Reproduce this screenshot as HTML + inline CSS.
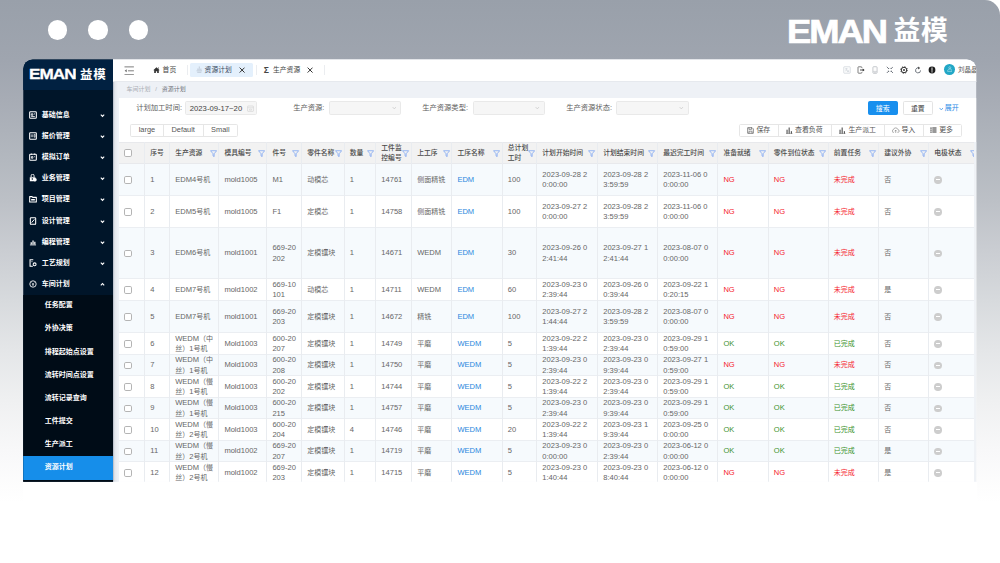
<!DOCTYPE html>
<html lang="zh-CN">
<head>
<meta charset="utf-8">
<title>EMAN 益模 - 资源计划</title>
<style>
*{box-sizing:border-box;margin:0;padding:0}
html,body{width:1000px;height:563px;overflow:hidden;background:#fff}
body{font-family:"Liberation Sans","Noto Sans CJK SC",sans-serif;font-size:7px;color:#555;position:relative;-webkit-font-smoothing:antialiased}
.abs,.bg,.dot,.win,.win>*,.th,.td,.tr,.thead,.vl,.fn{position:absolute}
.bg{left:0;top:0;width:1000px;height:520px;border-top-right-radius:15px;
 background:linear-gradient(180deg,#99a0aa 0px,#9fa5af 60px,#a7acb5 100px,#b3b8bf 160px,#bcc0c6 200px,#cacdd2 250px,#d7dadd 300px,#e4e6e8 350px,#eff0f1 400px,#f8f8f9 450px,#ffffff 502px)}
.dot{width:19.5px;height:19.5px;border-radius:50%;background:#fff;top:20.2px}
.brand{position:absolute;left:789px;top:12px;height:36px;color:#fff;white-space:nowrap;font-weight:700}
.brand .en{position:absolute;left:-2.4px;top:4.3px;font-size:32.6px;line-height:32px;letter-spacing:-1.8px;-webkit-text-stroke:0.7px #fff;transform-origin:0 50%;transform:scaleX(1.115)}
.brand .cn{position:absolute;left:104.6px;top:4.2px;font-size:26.8px;line-height:30px;font-family:"Liberation Sans","Noto Sans CJK SC",sans-serif;font-weight:700;letter-spacing:0.5px}
.win{left:0;top:0;width:1000px;height:563px;clip-path:inset(59.5px 23.8px 81.3px 23.2px round 9.5px 9.5px 0 0);background:#eef1f6}
/* sidebar */
.sb{left:23px;top:59px;width:89.9px;height:423px;background:#001529}
.sbh{left:23px;top:59px;width:89.9px;height:31px;background:#012141}
.sub{left:23px;top:294.8px;width:89.9px;height:190px;background:#000c17}
.sel{left:23px;top:456px;width:89.9px;height:24px;background:#168eea}
.logo{left:29.6px;top:66px;color:#fff;font-weight:700;white-space:nowrap;height:16px}
.logo .en{position:absolute;left:-0.8px;top:-0.1px;font-size:15px;line-height:16px;letter-spacing:-0.83px;-webkit-text-stroke:0.3px #fff;transform-origin:0 50%;transform:scaleX(1.14)}
.logo .cn{position:absolute;left:50.5px;top:1px;font-size:12.5px;line-height:16px;font-family:"Liberation Sans","Noto Sans CJK SC",sans-serif;font-weight:700;letter-spacing:0.6px}
.mi{left:41.8px;color:#fff;font-weight:700;font-size:7px;line-height:10px;white-space:nowrap;height:10px;font-family:"Liberation Sans","Noto Sans CJK SC",sans-serif}
.si{left:44.8px;color:#fff;font-weight:700;font-size:7px;line-height:10px;white-space:nowrap;height:10px;font-family:"Liberation Sans","Noto Sans CJK SC",sans-serif}
.ic{left:29.4px;width:8px;height:8px}
.chv{left:99.6px;width:5px;height:5px}
/* topbar */
.tb{left:112.9px;top:59px;width:865px;height:23px;background:#fff;border-bottom:1px solid #e6e9ee}
.bc{left:126.4px;top:85px;font-size:6px;line-height:9px;color:#a9adb3;white-space:nowrap}
.bc b{font-weight:400;color:#6b6f76}
.tab{top:63.2px;height:13px;line-height:13px;font-size:6.8px;color:#444;white-space:nowrap}
.tabact{left:190.4px;top:62.6px;width:62.2px;height:14px;background:#e4f0fc;border-radius:1.5px}
.sep{top:65px;width:0.6px;height:9.5px;background:#ebedf0}
/* panel */
.panel{left:118.5px;top:97.5px;width:859px;height:400px;background:#fff}
.lbl{top:103.1px;font-size:7.3px;line-height:10px;color:#5c5c5c;white-space:nowrap;text-align:right}
.inp{top:101px;height:14px;background:#f6f6f6;border:0.6px solid #e9e9e9;border-radius:1.6px}
.btn{height:14px;line-height:13.4px;border:0.6px solid #e4e4e4;border-radius:1.6px;background:#fff;font-size:6.9px;text-align:center;color:#444;white-space:nowrap}
.grp{height:13.4px;border:0.6px solid #e6e6e6;border-radius:1.6px;background:#fff}
.gt{font-size:6.9px;line-height:13.4px;height:13.4px;color:#555;white-space:nowrap;text-align:center}
.gd{width:0.6px;height:13.4px;background:#e6e6e6}
/* table */
.thead{background:#f2f2f2;border-top:1px solid #e8e9ec;border-bottom:1px solid #e8e9ec}
.tr{background:#fff;border-bottom:1px solid #ebeef2}
.tr.odd{background:#f6fafd}
.vl{width:0.6px;background:#e9ecf0}
.th,.td{display:flex;align-items:center;padding-left:5.8px;overflow:hidden}
.th .t{font-family:"Liberation Sans","Noto Sans CJK SC",sans-serif;font-weight:500;font-size:6.8px;line-height:9.6px;color:#4a4a4a;white-space:nowrap}
.td .t{font-size:7.55px;line-height:10.4px;color:#666;white-space:nowrap}
.td .t .c{font-size:7px}
.td.lk .t{color:#2b87dd}
.td.ng .t{color:#f5222d}
.td.ok .t{color:#3c922e}
.cb{display:block;width:7.6px;height:7.6px;border:0.9px solid #b4b4b4;border-radius:1.8px;background:#fff;margin-left:-0.3px}
.minus{display:block;width:7.6px;height:7.6px;border-radius:50%;background:#cdcdcd;position:relative;margin-left:-0.1px}
.minus:after{content:"";position:absolute;left:1.9px;right:1.9px;top:3.1px;height:1px;background:#fff}
.fn{width:7.2px;height:7.2px}
</style>
</head>
<body>
<div class="bg"></div>
<div class="dot" style="left:47.8px"></div>
<div class="dot" style="left:88.3px"></div>
<div class="dot" style="left:128.6px"></div>
<div class="brand"><span class="en">EMAN</span><span class="cn">益模</span></div>

<div class="abs" style="left:23.2px;top:481.7px;width:953.6px;height:90px;background:#fff"></div>
<div class="win">
  <!-- sidebar -->
  <div class="sb"></div>
  <div class="sbh"></div>
  <div class="sub"></div>
  <div class="sel"></div>
  <div class="logo"><span class="en">EMAN</span><span class="cn">益模</span></div>
  <svg class="ic" style="top:111.1px" viewBox="0 0 12 12"><rect x="1" y="1.2" width="10" height="9.6" rx="1.2" fill="none" stroke="#fff" stroke-width="1.6"/><path d="M3.4 4.2h2.4v2.2H3.4zM3.2 8.4h5.6M7.4 4.4h1.6" stroke="#fff" stroke-width="1.3" fill="none"/></svg>
  <div class="mi" style="top:110.0px">基础信息</div>
  <svg class="chv" style="top:113.0px" viewBox="0 0 10 10"><path d="M1.6 3.2L5 6.8l3.4-3.6" fill="none" stroke="#fff" stroke-width="2.1"/></svg>
  <svg class="ic" style="top:132.1px" viewBox="0 0 12 12"><rect x="1" y="1.2" width="10" height="9.6" rx="0.8" fill="none" stroke="#fff" stroke-width="1.6"/><path d="M3.4 3.6v4.2M5.6 3.6v4.2M7.8 3.6h1.4v4.2H7.8z" stroke="#fff" stroke-width="1" fill="none"/></svg>
  <div class="mi" style="top:131.0px">报价管理</div>
  <svg class="chv" style="top:134.0px" viewBox="0 0 10 10"><path d="M1.6 3.2L5 6.8l3.4-3.6" fill="none" stroke="#fff" stroke-width="2.1"/></svg>
  <svg class="ic" style="top:153.1px" viewBox="0 0 12 12"><rect x="1" y="1.8" width="10" height="9" rx="1.2" fill="none" stroke="#fff" stroke-width="1.6"/><path d="M3.6 0.8v2M8.4 0.8v2M3.6 5.4h2.2v2.4H3.6zM7.6 5.6h1.2" stroke="#fff" stroke-width="1.3" fill="none"/></svg>
  <div class="mi" style="top:152.0px">模拟订单</div>
  <svg class="chv" style="top:155.0px" viewBox="0 0 10 10"><path d="M1.6 3.2L5 6.8l3.4-3.6" fill="none" stroke="#fff" stroke-width="2.1"/></svg>
  <svg class="ic" style="top:174.1px" viewBox="0 0 12 12"><path d="M3.2 4.6V2.6a2.2 2.2 0 0 1 4.4 0v2" fill="none" stroke="#fff" stroke-width="1.4"/><path d="M1.2 5h8.4v6H1.2z" fill="#fff"/><circle cx="9" cy="8.6" r="2.6" fill="#fff"/><circle cx="5" cy="7.4" r="1.2" fill="#001529"/></svg>
  <div class="mi" style="top:173.0px">业务管理</div>
  <svg class="chv" style="top:176.0px" viewBox="0 0 10 10"><path d="M1.6 3.2L5 6.8l3.4-3.6" fill="none" stroke="#fff" stroke-width="2.1"/></svg>
  <svg class="ic" style="top:195.1px" viewBox="0 0 12 12"><path d="M1 2.4h3.6l1 1.2H11v7H1z" fill="none" stroke="#fff" stroke-width="1.6" stroke-linejoin="round"/><path d="M3.2 6h5.6v2.4H3.2z" fill="#fff"/></svg>
  <div class="mi" style="top:194.0px">项目管理</div>
  <svg class="chv" style="top:197.0px" viewBox="0 0 10 10"><path d="M1.6 3.2L5 6.8l3.4-3.6" fill="none" stroke="#fff" stroke-width="2.1"/></svg>
  <svg class="ic" style="top:217.1px" viewBox="0 0 12 12"><rect x="2" y="1" width="8" height="10" rx="1" fill="none" stroke="#fff" stroke-width="1.6"/><path d="M4 8.4L8 3.6" stroke="#fff" stroke-width="1.5" fill="none"/></svg>
  <div class="mi" style="top:216.0px">设计管理</div>
  <svg class="chv" style="top:219.0px" viewBox="0 0 10 10"><path d="M1.6 3.2L5 6.8l3.4-3.6" fill="none" stroke="#fff" stroke-width="2.1"/></svg>
  <svg class="ic" style="top:238.1px" viewBox="0 0 12 12"><path d="M1.4 10.4h9.2" stroke="#fff" stroke-width="1.2"/><path d="M2.4 6.4h1.9v3.4H2.4zM5.1 3.6h1.9v6.2H5.1zM7.8 5.6h1.9v4.2H7.8z" fill="#fff"/></svg>
  <div class="mi" style="top:237.0px">编程管理</div>
  <svg class="chv" style="top:240.0px" viewBox="0 0 10 10"><path d="M1.6 3.2L5 6.8l3.4-3.6" fill="none" stroke="#fff" stroke-width="2.1"/></svg>
  <svg class="ic" style="top:259.1px" viewBox="0 0 12 12"><path d="M6.4 1.2H1.6v9.6h4.2" fill="none" stroke="#fff" stroke-width="1.6"/><path d="M3.4 4h2" stroke="#fff" stroke-width="1"/><circle cx="8.4" cy="8" r="2.2" fill="none" stroke="#fff" stroke-width="1.6"/></svg>
  <div class="mi" style="top:258.0px">工艺规划</div>
  <svg class="chv" style="top:261.0px" viewBox="0 0 10 10"><path d="M1.6 3.2L5 6.8l3.4-3.6" fill="none" stroke="#fff" stroke-width="2.1"/></svg>
  <svg class="ic" style="top:280.1px" viewBox="0 0 12 12"><circle cx="6" cy="6" r="4.8" fill="none" stroke="#fff" stroke-width="1.3"/><path d="M3.8 3.8L6 6l2.2-2.2M6 6v3M4.4 7h3.2" stroke="#fff" stroke-width="0.9" fill="none"/></svg>
  <div class="mi" style="top:279.0px">车间计划</div>
  <svg class="chv" style="top:281.6px" viewBox="0 0 10 10"><path d="M1.6 6.8L5 3.2l3.4 3.6" fill="none" stroke="#fff" stroke-width="2.1"/></svg>
  <div class="si" style="top:300.3px">任务配置</div>
  <div class="si" style="top:323.4px">外协决策</div>
  <div class="si" style="top:346.6px">排程起始点设置</div>
  <div class="si" style="top:369.8px">流转时间点设置</div>
  <div class="si" style="top:392.9px">流转记录查询</div>
  <div class="si" style="top:416.1px">工件提交</div>
  <div class="si" style="top:439.2px">生产派工</div>
  <div class="si" style="top:462.3px">资源计划</div>
  <div class="abs" style="left:112.9px;top:82px;width:5.6px;height:402px;background:linear-gradient(90deg,#a9b0bd 0,#d9dde4 22%,#e6e9ee 50%,#eef1f6 100%)"></div>
  <!-- topbar -->
  <div class="tb"></div>
  <svg class="abs" style="left:123.6px;top:65.6px;width:10.4px;height:9.6px" viewBox="0 0 21 19"><path d="M1 1.6h19M8 9.5h12M1 17.4h19" stroke="#666" stroke-width="1.7" fill="none"/><path d="M5.4 6.4L1.4 9.5l4 3.1z" fill="#666"/></svg>
  <svg class="abs" style="left:153.2px;top:66.8px;width:7px;height:6.4px" viewBox="0 0 14 13"><path d="M7 0.6L0.4 6.6h1.9v5.8h3.4V8.4h2.6v4h3.4V6.6h1.9z" fill="#333"/><path d="M10.2 1.2h1.6v2.6l-1.6-1.4z" fill="#333"/></svg>
  <div class="tab" style="left:162.6px">首页</div>
  <div class="sep" style="left:187.2px"></div>
  <div class="tabact"></div>
  <svg class="abs" style="left:196.2px;top:66.2px;width:6.6px;height:7px" viewBox="0 0 13 14"><path d="M6.5 1v4M2 6.4h9M1 9.6h11M2.4 12.6h8.2" stroke="#a9b4c2" stroke-width="1.2" fill="none"/></svg>
  <div class="tab" style="left:204.6px;color:#3a4a5c">资源计划</div>
  <svg class="abs" style="left:238.6px;top:66.6px;width:6.2px;height:6.2px" viewBox="0 0 10 10"><path d="M1 1l8 8M9 1L1 9" stroke="#333" stroke-width="1.6"/></svg>
  <div class="sep" style="left:256px"></div>
  <div class="tab" style="left:263.8px;top:64px;font-weight:700;font-size:8.6px">Σ</div>
  <div class="tab" style="left:273px">生产资源</div>
  <svg class="abs" style="left:307px;top:66.6px;width:6.2px;height:6.2px" viewBox="0 0 10 10"><path d="M1 1l8 8M9 1L1 9" stroke="#333" stroke-width="1.6"/></svg>
  <div class="sep" style="left:324.4px"></div>
  <svg class="abs" style="left:843.2px;top:65.6px;width:8px;height:8px" viewBox="0 0 16 16"><rect x="1.4" y="1.4" width="13.2" height="13.2" rx="1.6" fill="#fafbfc" stroke="#cdd3da" stroke-width="1.3"/><path d="M4.4 5.2h4.4M6.6 4v1.2M8 5.4c-.4 2.4-1.6 3.8-3.6 4.6M5.6 7c.8 1.4 2 2.4 3.4 2.8M8.6 12.4l1.6-4 1.6 4M9.2 11.2h2" stroke="#c3c9d1" stroke-width="0.9" fill="none"/></svg>
  <svg class="abs" style="left:857.4px;top:65.6px;width:8px;height:8px" viewBox="0 0 16 16"><path d="M9.6 4V2.6c0-.6-.4-1-1-1H3c-.6 0-1 .4-1 1v10.8c0 .6.4 1 1 1h5.6c.6 0 1-.4 1-1V12" fill="none" stroke="#555" stroke-width="1.5"/><path d="M6 8h7" fill="none" stroke="#2e2e2e" stroke-width="1.7"/><path d="M11.4 4.8L15.2 8l-3.8 3.2z" fill="#2e2e2e"/></svg>
  <svg class="abs" style="left:871.4px;top:65.6px;width:8px;height:8px" viewBox="0 0 16 16"><rect x="3.8" y="1.4" width="8.4" height="13.2" rx="1.6" fill="#fcfcfc" stroke="#a9adb3" stroke-width="1.3"/><path d="M4 10.8h8" stroke="#b9bcc2" stroke-width="1"/><path d="M6.6 12.6h2.8" stroke="#a9adb3" stroke-width="1.2"/></svg>
  <svg class="abs" style="left:885.6px;top:65.7px;width:7.8px;height:7.8px" viewBox="0 0 16 16"><path d="M1.6 1.6l4 4M14.4 1.6l-4 4M1.6 14.4l4-4M14.4 14.4l-4-4" stroke="#555c66" stroke-width="1.6" fill="none"/><path d="M6.4 3.4v3h-3zM9.6 3.4v3h3zM6.4 12.6v-3h-3zM9.6 12.6v-3h3z" fill="#555c66"/></svg>
  <svg class="abs" style="left:899.5px;top:65.6px;width:8.0px;height:8.0px" viewBox="0 0 16 16"><circle cx="8" cy="8" r="5.5" fill="none" stroke="#2f2f2f" stroke-width="2"/><circle cx="8" cy="8" r="6.9" fill="none" stroke="#2f2f2f" stroke-width="1.5" stroke-dasharray="2.4 3.02"/><circle cx="8" cy="8" r="1.9" fill="#2f2f2f"/></svg>
  <svg class="abs" style="left:913.8px;top:65.5px;width:8.2px;height:8.2px" viewBox="0 0 16 16"><path d="M12.8 8.6a4.9 4.9 0 1 1-2.6-4.4" fill="none" stroke="#555c66" stroke-width="1.6"/><path d="M8 1.2l4 2.8L8.2 6.6z" fill="#444"/></svg>
  <svg class="abs" style="left:927.6px;top:65.6px;width:8.0px;height:8.0px" viewBox="0 0 16 16"><circle cx="8" cy="8" r="6.8" fill="#1c1c1c"/><path d="M8 3v10" stroke="#d9d9d9" stroke-width="2.2"/><path d="M8 9.6v1" stroke="#1c1c1c" stroke-width="2.4"/></svg>
  <div class="abs" style="left:944.1px;top:64.1px;width:10.8px;height:10.8px;border-radius:50%;background:#22a7c6"></div>
  <svg class="abs" style="left:946.7px;top:66.4px;width:5.6px;height:6.2px" viewBox="0 0 10 11"><circle cx="5" cy="3" r="1.8" fill="none" stroke="#bfe9f3" stroke-width="1"/><path d="M1 9.6c0-3 1.6-4.2 4-4.2s4 1.2 4 4.2z" fill="none" stroke="#bfe9f3" stroke-width="1"/></svg>
  <div class="abs" style="left:958px;top:64.6px;font-size:6.5px;line-height:10px;color:#555;white-space:nowrap">刘晶晶</div>
  <div class="bc">车间计划<span style="display:inline-block;width:11.4px;text-align:center">/</span><b>资源计划</b></div>
  <!-- panel -->
  <div class="panel"></div>
  <div class="lbl" style="left:130px;width:52px">计划加工时间:</div>
  <div class="inp" style="left:185px;width:72px"></div>
  <div class="abs" style="left:189.8px;top:104px;font-size:7.7px;line-height:10px;color:#444;white-space:nowrap">2023-09-17~20</div>
  <svg class="abs" style="left:246.6px;top:104.8px;width:7px;height:7px" viewBox="0 0 14 14"><rect x="1.2" y="2" width="11.6" height="10.8" rx="1" fill="none" stroke="#d0d0d0" stroke-width="1.2"/><path d="M1.2 5.4h11.6M5 8h4v2.4H5z" stroke="#d0d0d0" stroke-width="1" fill="none"/></svg>
  <div class="lbl" style="left:278.4px;width:46px">生产资源:</div>
  <div class="inp" style="left:329px;width:72px"></div>
  <svg class="abs" style="left:391.6px;top:106.4px;width:4.6px;height:4px" viewBox="0 0 10 8"><path d="M1.4 2L5 6l3.6-4" fill="none" stroke="#c4c4c4" stroke-width="1.5"/></svg>
  <div class="lbl" style="left:413.6px;width:54.4px">生产资源类型:</div>
  <div class="inp" style="left:473px;width:71.8px"></div>
  <svg class="abs" style="left:535.4px;top:106.4px;width:4.6px;height:4px" viewBox="0 0 10 8"><path d="M1.4 2L5 6l3.6-4" fill="none" stroke="#c4c4c4" stroke-width="1.5"/></svg>
  <div class="lbl" style="left:556.6px;width:55.4px">生产资源状态:</div>
  <div class="inp" style="left:616.4px;width:72.2px"></div>
  <svg class="abs" style="left:679.2px;top:106.4px;width:4.6px;height:4px" viewBox="0 0 10 8"><path d="M1.4 2L5 6l3.6-4" fill="none" stroke="#c4c4c4" stroke-width="1.5"/></svg>
  <div class="btn abs" style="left:867.6px;top:101px;width:30.2px;background:#188fee;border-color:#188fee;color:#fff">搜索</div>
  <div class="btn abs" style="left:902.8px;top:101px;width:30px">重置</div>
  <svg class="abs" style="left:938.6px;top:106.6px;width:4.6px;height:4px" viewBox="0 0 10 8"><path d="M1.2 1.6L5 6l3.8-4.4" fill="none" stroke="#2b8be6" stroke-width="1.5"/></svg>
  <div class="abs" style="left:944.8px;top:103.4px;font-size:7px;line-height:10px;color:#2b8be6;white-space:nowrap">展开</div>
  <div class="grp abs" style="left:130.4px;top:123.5px;width:107.2px"></div>
  <div class="gd abs" style="left:163.2px;top:123.5px"></div>
  <div class="gd abs" style="left:202.8px;top:123.5px"></div>
  <div class="gt abs" style="left:130.4px;top:123.3px;width:33px;font-size:7.4px">large</div>
  <div class="gt abs" style="left:163.4px;top:123.3px;width:39.6px;font-size:7.4px">Default</div>
  <div class="gt abs" style="left:203px;top:123.3px;width:34.6px;font-size:7.4px">Small</div>
  <div class="grp abs" style="left:739px;top:123.5px;width:222.8px"></div>
  <div class="gd abs" style="left:777.5px;top:123.5px"></div>
  <div class="gd abs" style="left:831.1px;top:123.5px"></div>
  <div class="gd abs" style="left:884.1px;top:123.5px"></div>
  <div class="gd abs" style="left:922.6px;top:123.5px"></div>
  <svg class="abs" style="left:746.8px;top:126.6px;width:7px;height:7px" viewBox="0 0 14 14"><path d="M1.4 1.4h8.8l2.4 2.4v8.8H1.4z" fill="none" stroke="#555" stroke-width="1.4"/><path d="M4 1.4v3.4h5V1.4M4 12.6V8.4h6v4.2" fill="none" stroke="#555" stroke-width="1.2"/></svg>
  <div class="gt abs" style="left:756.4px;top:123.3px">保存</div>
  <svg class="abs" style="left:786px;top:126.6px;width:6.6px;height:7px" viewBox="0 0 13 14"><path d="M2 5.4v8M6.2 1v12.4M10.6 8.4v5" stroke="#3d3d3d" stroke-width="2" fill="none"/><path d="M0 13.4h13" stroke="#3d3d3d" stroke-width="0.8"/></svg>
  <div class="gt abs" style="left:795px;top:123.3px">查看负荷</div>
  <svg class="abs" style="left:839.4px;top:126.6px;width:6.6px;height:7px" viewBox="0 0 13 14"><path d="M2 5.4v8M6.2 1v12.4M10.6 8.4v5" stroke="#3d3d3d" stroke-width="2" fill="none"/><path d="M0 13.4h13" stroke="#3d3d3d" stroke-width="0.8"/></svg>
  <div class="gt abs" style="left:848.4px;top:123.3px">生产派工</div>
  <svg class="abs" style="left:892.4px;top:127px;width:7.4px;height:6.4px" viewBox="0 0 15 13"><path d="M4 11H3.4a2.8 2.8 0 0 1-.4-5.6 4.6 4.6 0 0 1 9 0 2.8 2.8 0 0 1-.4 5.6H11" fill="none" stroke="#777" stroke-width="1.2"/><path d="M7.5 12V6.6M5.4 8.6l2.1-2.2 2.1 2.2" fill="none" stroke="#777" stroke-width="1.2"/></svg>
  <div class="gt abs" style="left:901.4px;top:123.3px">导入</div>
  <svg class="abs" style="left:929.6px;top:127.2px;width:7px;height:6.2px" viewBox="0 0 14 12"><path d="M4.6 2h8.4M4.6 6h8.4M4.6 10h8.4" stroke="#333" stroke-width="2.1"/><path d="M0.8 2h2.4M0.8 6h2.4M0.8 10h2.4" stroke="#333" stroke-width="2.3"/></svg>
  <div class="gt abs" style="left:939.2px;top:123.3px">更多</div>
<div class="thead" style="left:118.5px;top:142.0px;width:855.3px;height:22.0px"></div>
<div class="th" style="left:118.5px;top:142.0px;width:26.0px;height:22.0px"><span class="cb"></span></div>
<div class="th" style="left:144.5px;top:142.0px;width:24.9px;height:22.0px"><span class="t">序号</span></div>
<div class="th" style="left:169.4px;top:142.0px;width:49.2px;height:22.0px"><span class="t">生产资源</span></div>
<svg class="fn" style="left:209.6px;top:150.3px" viewBox="0 0 10 10"><path d="M0.8 1h8.4L5.8 5.2v4L4.2 8.2v-3z" fill="none" stroke="#7aa3f3" stroke-width="1.05" stroke-linejoin="round"/></svg>
<div class="th" style="left:218.6px;top:142.0px;width:48.0px;height:22.0px"><span class="t">模具编号</span></div>
<svg class="fn" style="left:257.6px;top:150.3px" viewBox="0 0 10 10"><path d="M0.8 1h8.4L5.8 5.2v4L4.2 8.2v-3z" fill="none" stroke="#7aa3f3" stroke-width="1.05" stroke-linejoin="round"/></svg>
<div class="th" style="left:266.6px;top:142.0px;width:34.8px;height:22.0px"><span class="t">件号</span></div>
<svg class="fn" style="left:292.4px;top:150.3px" viewBox="0 0 10 10"><path d="M0.8 1h8.4L5.8 5.2v4L4.2 8.2v-3z" fill="none" stroke="#7aa3f3" stroke-width="1.05" stroke-linejoin="round"/></svg>
<div class="th" style="left:301.4px;top:142.0px;width:42.6px;height:22.0px"><span class="t">零件名称</span></div>
<svg class="fn" style="left:335.0px;top:150.3px" viewBox="0 0 10 10"><path d="M0.8 1h8.4L5.8 5.2v4L4.2 8.2v-3z" fill="none" stroke="#7aa3f3" stroke-width="1.05" stroke-linejoin="round"/></svg>
<div class="th" style="left:344.0px;top:142.0px;width:31.5px;height:22.0px"><span class="t">数量</span></div>
<svg class="fn" style="left:366.5px;top:150.3px" viewBox="0 0 10 10"><path d="M0.8 1h8.4L5.8 5.2v4L4.2 8.2v-3z" fill="none" stroke="#7aa3f3" stroke-width="1.05" stroke-linejoin="round"/></svg>
<div class="th" style="left:375.5px;top:142.0px;width:35.9px;height:22.0px"><span class="t">工件监<br>控编号</span></div>
<svg class="fn" style="left:402.4px;top:150.3px" viewBox="0 0 10 10"><path d="M0.8 1h8.4L5.8 5.2v4L4.2 8.2v-3z" fill="none" stroke="#7aa3f3" stroke-width="1.05" stroke-linejoin="round"/></svg>
<div class="th" style="left:411.4px;top:142.0px;width:40.2px;height:22.0px"><span class="t">上工序</span></div>
<svg class="fn" style="left:442.6px;top:150.3px" viewBox="0 0 10 10"><path d="M0.8 1h8.4L5.8 5.2v4L4.2 8.2v-3z" fill="none" stroke="#7aa3f3" stroke-width="1.05" stroke-linejoin="round"/></svg>
<div class="th" style="left:451.6px;top:142.0px;width:50.4px;height:22.0px"><span class="t">工序名称</span></div>
<svg class="fn" style="left:493.0px;top:150.3px" viewBox="0 0 10 10"><path d="M0.8 1h8.4L5.8 5.2v4L4.2 8.2v-3z" fill="none" stroke="#7aa3f3" stroke-width="1.05" stroke-linejoin="round"/></svg>
<div class="th" style="left:502.0px;top:142.0px;width:34.5px;height:22.0px"><span class="t">总计划<br>工时</span></div>
<svg class="fn" style="left:527.5px;top:150.3px" viewBox="0 0 10 10"><path d="M0.8 1h8.4L5.8 5.2v4L4.2 8.2v-3z" fill="none" stroke="#7aa3f3" stroke-width="1.05" stroke-linejoin="round"/></svg>
<div class="th" style="left:536.5px;top:142.0px;width:60.9px;height:22.0px"><span class="t">计划开始时间</span></div>
<svg class="fn" style="left:588.4px;top:150.3px" viewBox="0 0 10 10"><path d="M0.8 1h8.4L5.8 5.2v4L4.2 8.2v-3z" fill="none" stroke="#7aa3f3" stroke-width="1.05" stroke-linejoin="round"/></svg>
<div class="th" style="left:597.4px;top:142.0px;width:60.0px;height:22.0px"><span class="t">计划结束时间</span></div>
<svg class="fn" style="left:648.4px;top:150.3px" viewBox="0 0 10 10"><path d="M0.8 1h8.4L5.8 5.2v4L4.2 8.2v-3z" fill="none" stroke="#7aa3f3" stroke-width="1.05" stroke-linejoin="round"/></svg>
<div class="th" style="left:657.4px;top:142.0px;width:60.2px;height:22.0px"><span class="t">最迟完工时间</span></div>
<svg class="fn" style="left:708.6px;top:150.3px" viewBox="0 0 10 10"><path d="M0.8 1h8.4L5.8 5.2v4L4.2 8.2v-3z" fill="none" stroke="#7aa3f3" stroke-width="1.05" stroke-linejoin="round"/></svg>
<div class="th" style="left:717.6px;top:142.0px;width:50.4px;height:22.0px"><span class="t">准备就绪</span></div>
<svg class="fn" style="left:759.0px;top:150.3px" viewBox="0 0 10 10"><path d="M0.8 1h8.4L5.8 5.2v4L4.2 8.2v-3z" fill="none" stroke="#7aa3f3" stroke-width="1.05" stroke-linejoin="round"/></svg>
<div class="th" style="left:768.0px;top:142.0px;width:60.0px;height:22.0px"><span class="t">零件到位状态</span></div>
<svg class="fn" style="left:819.0px;top:150.3px" viewBox="0 0 10 10"><path d="M0.8 1h8.4L5.8 5.2v4L4.2 8.2v-3z" fill="none" stroke="#7aa3f3" stroke-width="1.05" stroke-linejoin="round"/></svg>
<div class="th" style="left:828.0px;top:142.0px;width:50.4px;height:22.0px"><span class="t">前置任务</span></div>
<svg class="fn" style="left:869.4px;top:150.3px" viewBox="0 0 10 10"><path d="M0.8 1h8.4L5.8 5.2v4L4.2 8.2v-3z" fill="none" stroke="#7aa3f3" stroke-width="1.05" stroke-linejoin="round"/></svg>
<div class="th" style="left:878.4px;top:142.0px;width:50.1px;height:22.0px"><span class="t">建议外协</span></div>
<svg class="fn" style="left:919.5px;top:150.3px" viewBox="0 0 10 10"><path d="M0.8 1h8.4L5.8 5.2v4L4.2 8.2v-3z" fill="none" stroke="#7aa3f3" stroke-width="1.05" stroke-linejoin="round"/></svg>
<div class="th" style="left:928.5px;top:142.0px;width:45.3px;height:22.0px"><span class="t">电极状态</span></div>
<svg class="fn" style="left:970.2px;top:150.3px" viewBox="0 0 10 10"><path d="M0.8 1h8.4L5.8 5.2v4L4.2 8.2v-3z" fill="none" stroke="#7aa3f3" stroke-width="1.05" stroke-linejoin="round"/></svg>
<div class="tr odd" style="left:118.5px;top:164.0px;width:855.3px;height:32.0px"></div>
<div class="td" style="left:118.5px;top:164.0px;width:26.0px;height:32.0px"><span class="cb"></span></div>
<div class="td" style="left:144.5px;top:164.0px;width:24.9px;height:32.0px"><span class="t">1</span></div>
<div class="td" style="left:169.4px;top:164.0px;width:49.2px;height:32.0px"><span class="t">EDM4<span class="c">号机</span></span></div>
<div class="td" style="left:218.6px;top:164.0px;width:48.0px;height:32.0px"><span class="t">mold1005</span></div>
<div class="td" style="left:266.6px;top:164.0px;width:34.8px;height:32.0px"><span class="t">M1</span></div>
<div class="td" style="left:301.4px;top:164.0px;width:42.6px;height:32.0px"><span class="t"><span class="c">动模芯</span></span></div>
<div class="td" style="left:344.0px;top:164.0px;width:31.5px;height:32.0px"><span class="t">1</span></div>
<div class="td" style="left:375.5px;top:164.0px;width:35.9px;height:32.0px"><span class="t">14761</span></div>
<div class="td" style="left:411.4px;top:164.0px;width:40.2px;height:32.0px"><span class="t"><span class="c">侧面精铣</span></span></div>
<div class="td lk" style="left:451.6px;top:164.0px;width:50.4px;height:32.0px"><span class="t">EDM</span></div>
<div class="td" style="left:502.0px;top:164.0px;width:34.5px;height:32.0px"><span class="t">100</span></div>
<div class="td" style="left:536.5px;top:164.0px;width:60.9px;height:32.0px"><span class="t">2023-09-28 2<br>0:00:00</span></div>
<div class="td" style="left:597.4px;top:164.0px;width:60.0px;height:32.0px"><span class="t">2023-09-28 2<br>3:59:59</span></div>
<div class="td" style="left:657.4px;top:164.0px;width:60.2px;height:32.0px"><span class="t">2023-11-06 0<br>0:00:00</span></div>
<div class="td ng" style="left:717.6px;top:164.0px;width:50.4px;height:32.0px"><span class="t">NG</span></div>
<div class="td ng" style="left:768.0px;top:164.0px;width:60.0px;height:32.0px"><span class="t">NG</span></div>
<div class="td ng" style="left:828.0px;top:164.0px;width:50.4px;height:32.0px"><span class="t"><span class="c">未完成</span></span></div>
<div class="td" style="left:878.4px;top:164.0px;width:50.1px;height:32.0px"><span class="t"><span class="c">否</span></span></div>
<div class="td" style="left:928.5px;top:164.0px;width:45.3px;height:32.0px"><span class="minus"></span></div>
<div class="tr" style="left:118.5px;top:196.0px;width:855.3px;height:32.0px"></div>
<div class="td" style="left:118.5px;top:196.0px;width:26.0px;height:32.0px"><span class="cb"></span></div>
<div class="td" style="left:144.5px;top:196.0px;width:24.9px;height:32.0px"><span class="t">2</span></div>
<div class="td" style="left:169.4px;top:196.0px;width:49.2px;height:32.0px"><span class="t">EDM5<span class="c">号机</span></span></div>
<div class="td" style="left:218.6px;top:196.0px;width:48.0px;height:32.0px"><span class="t">mold1005</span></div>
<div class="td" style="left:266.6px;top:196.0px;width:34.8px;height:32.0px"><span class="t">F1</span></div>
<div class="td" style="left:301.4px;top:196.0px;width:42.6px;height:32.0px"><span class="t"><span class="c">定模芯</span></span></div>
<div class="td" style="left:344.0px;top:196.0px;width:31.5px;height:32.0px"><span class="t">1</span></div>
<div class="td" style="left:375.5px;top:196.0px;width:35.9px;height:32.0px"><span class="t">14758</span></div>
<div class="td" style="left:411.4px;top:196.0px;width:40.2px;height:32.0px"><span class="t"><span class="c">侧面精铣</span></span></div>
<div class="td lk" style="left:451.6px;top:196.0px;width:50.4px;height:32.0px"><span class="t">EDM</span></div>
<div class="td" style="left:502.0px;top:196.0px;width:34.5px;height:32.0px"><span class="t">100</span></div>
<div class="td" style="left:536.5px;top:196.0px;width:60.9px;height:32.0px"><span class="t">2023-09-27 2<br>0:00:00</span></div>
<div class="td" style="left:597.4px;top:196.0px;width:60.0px;height:32.0px"><span class="t">2023-09-28 2<br>3:59:59</span></div>
<div class="td" style="left:657.4px;top:196.0px;width:60.2px;height:32.0px"><span class="t">2023-11-06 0<br>0:00:00</span></div>
<div class="td ng" style="left:717.6px;top:196.0px;width:50.4px;height:32.0px"><span class="t">NG</span></div>
<div class="td ng" style="left:768.0px;top:196.0px;width:60.0px;height:32.0px"><span class="t">NG</span></div>
<div class="td ng" style="left:828.0px;top:196.0px;width:50.4px;height:32.0px"><span class="t"><span class="c">未完成</span></span></div>
<div class="td" style="left:878.4px;top:196.0px;width:50.1px;height:32.0px"><span class="t"><span class="c">否</span></span></div>
<div class="td" style="left:928.5px;top:196.0px;width:45.3px;height:32.0px"><span class="minus"></span></div>
<div class="tr odd" style="left:118.5px;top:228.0px;width:855.3px;height:51.0px"></div>
<div class="td" style="left:118.5px;top:228.0px;width:26.0px;height:51.0px"><span class="cb"></span></div>
<div class="td" style="left:144.5px;top:228.0px;width:24.9px;height:51.0px"><span class="t">3</span></div>
<div class="td" style="left:169.4px;top:228.0px;width:49.2px;height:51.0px"><span class="t">EDM6<span class="c">号机</span></span></div>
<div class="td" style="left:218.6px;top:228.0px;width:48.0px;height:51.0px"><span class="t">mold1001</span></div>
<div class="td" style="left:266.6px;top:228.0px;width:34.8px;height:51.0px"><span class="t">669-20<br>202</span></div>
<div class="td" style="left:301.4px;top:228.0px;width:42.6px;height:51.0px"><span class="t"><span class="c">定模镶块</span></span></div>
<div class="td" style="left:344.0px;top:228.0px;width:31.5px;height:51.0px"><span class="t">1</span></div>
<div class="td" style="left:375.5px;top:228.0px;width:35.9px;height:51.0px"><span class="t">14671</span></div>
<div class="td" style="left:411.4px;top:228.0px;width:40.2px;height:51.0px"><span class="t">WEDM</span></div>
<div class="td lk" style="left:451.6px;top:228.0px;width:50.4px;height:51.0px"><span class="t">EDM</span></div>
<div class="td" style="left:502.0px;top:228.0px;width:34.5px;height:51.0px"><span class="t">30</span></div>
<div class="td" style="left:536.5px;top:228.0px;width:60.9px;height:51.0px"><span class="t">2023-09-26 0<br>2:41:44</span></div>
<div class="td" style="left:597.4px;top:228.0px;width:60.0px;height:51.0px"><span class="t">2023-09-27 1<br>2:41:44</span></div>
<div class="td" style="left:657.4px;top:228.0px;width:60.2px;height:51.0px"><span class="t">2023-08-07 0<br>0:00:00</span></div>
<div class="td ng" style="left:717.6px;top:228.0px;width:50.4px;height:51.0px"><span class="t">NG</span></div>
<div class="td ng" style="left:768.0px;top:228.0px;width:60.0px;height:51.0px"><span class="t">NG</span></div>
<div class="td ng" style="left:828.0px;top:228.0px;width:50.4px;height:51.0px"><span class="t"><span class="c">未完成</span></span></div>
<div class="td" style="left:878.4px;top:228.0px;width:50.1px;height:51.0px"><span class="t"><span class="c">否</span></span></div>
<div class="td" style="left:928.5px;top:228.0px;width:45.3px;height:51.0px"><span class="minus"></span></div>
<div class="tr" style="left:118.5px;top:279.0px;width:855.3px;height:22.0px"></div>
<div class="td" style="left:118.5px;top:279.0px;width:26.0px;height:22.0px"><span class="cb"></span></div>
<div class="td" style="left:144.5px;top:279.0px;width:24.9px;height:22.0px"><span class="t">4</span></div>
<div class="td" style="left:169.4px;top:279.0px;width:49.2px;height:22.0px"><span class="t">EDM7<span class="c">号机</span></span></div>
<div class="td" style="left:218.6px;top:279.0px;width:48.0px;height:22.0px"><span class="t">mold1002</span></div>
<div class="td" style="left:266.6px;top:279.0px;width:34.8px;height:22.0px"><span class="t">669-10<br>101</span></div>
<div class="td" style="left:301.4px;top:279.0px;width:42.6px;height:22.0px"><span class="t"><span class="c">动模芯</span></span></div>
<div class="td" style="left:344.0px;top:279.0px;width:31.5px;height:22.0px"><span class="t">1</span></div>
<div class="td" style="left:375.5px;top:279.0px;width:35.9px;height:22.0px"><span class="t">14711</span></div>
<div class="td" style="left:411.4px;top:279.0px;width:40.2px;height:22.0px"><span class="t">WEDM</span></div>
<div class="td lk" style="left:451.6px;top:279.0px;width:50.4px;height:22.0px"><span class="t">EDM</span></div>
<div class="td" style="left:502.0px;top:279.0px;width:34.5px;height:22.0px"><span class="t">60</span></div>
<div class="td" style="left:536.5px;top:279.0px;width:60.9px;height:22.0px"><span class="t">2023-09-23 0<br>2:39:44</span></div>
<div class="td" style="left:597.4px;top:279.0px;width:60.0px;height:22.0px"><span class="t">2023-09-26 0<br>0:39:44</span></div>
<div class="td" style="left:657.4px;top:279.0px;width:60.2px;height:22.0px"><span class="t">2023-09-22 1<br>0:20:15</span></div>
<div class="td ng" style="left:717.6px;top:279.0px;width:50.4px;height:22.0px"><span class="t">NG</span></div>
<div class="td ng" style="left:768.0px;top:279.0px;width:60.0px;height:22.0px"><span class="t">NG</span></div>
<div class="td ng" style="left:828.0px;top:279.0px;width:50.4px;height:22.0px"><span class="t"><span class="c">未完成</span></span></div>
<div class="td" style="left:878.4px;top:279.0px;width:50.1px;height:22.0px"><span class="t"><span class="c">是</span></span></div>
<div class="td" style="left:928.5px;top:279.0px;width:45.3px;height:22.0px"><span class="minus"></span></div>
<div class="tr odd" style="left:118.5px;top:301.0px;width:855.3px;height:32.0px"></div>
<div class="td" style="left:118.5px;top:301.0px;width:26.0px;height:32.0px"><span class="cb"></span></div>
<div class="td" style="left:144.5px;top:301.0px;width:24.9px;height:32.0px"><span class="t">5</span></div>
<div class="td" style="left:169.4px;top:301.0px;width:49.2px;height:32.0px"><span class="t">EDM7<span class="c">号机</span></span></div>
<div class="td" style="left:218.6px;top:301.0px;width:48.0px;height:32.0px"><span class="t">mold1001</span></div>
<div class="td" style="left:266.6px;top:301.0px;width:34.8px;height:32.0px"><span class="t">669-20<br>203</span></div>
<div class="td" style="left:301.4px;top:301.0px;width:42.6px;height:32.0px"><span class="t"><span class="c">定模镶块</span></span></div>
<div class="td" style="left:344.0px;top:301.0px;width:31.5px;height:32.0px"><span class="t">1</span></div>
<div class="td" style="left:375.5px;top:301.0px;width:35.9px;height:32.0px"><span class="t">14672</span></div>
<div class="td" style="left:411.4px;top:301.0px;width:40.2px;height:32.0px"><span class="t"><span class="c">精铣</span></span></div>
<div class="td lk" style="left:451.6px;top:301.0px;width:50.4px;height:32.0px"><span class="t">EDM</span></div>
<div class="td" style="left:502.0px;top:301.0px;width:34.5px;height:32.0px"><span class="t">100</span></div>
<div class="td" style="left:536.5px;top:301.0px;width:60.9px;height:32.0px"><span class="t">2023-09-27 2<br>1:44:44</span></div>
<div class="td" style="left:597.4px;top:301.0px;width:60.0px;height:32.0px"><span class="t">2023-09-28 2<br>3:59:59</span></div>
<div class="td" style="left:657.4px;top:301.0px;width:60.2px;height:32.0px"><span class="t">2023-08-07 0<br>0:00:00</span></div>
<div class="td ng" style="left:717.6px;top:301.0px;width:50.4px;height:32.0px"><span class="t">NG</span></div>
<div class="td ng" style="left:768.0px;top:301.0px;width:60.0px;height:32.0px"><span class="t">NG</span></div>
<div class="td ng" style="left:828.0px;top:301.0px;width:50.4px;height:32.0px"><span class="t"><span class="c">未完成</span></span></div>
<div class="td" style="left:878.4px;top:301.0px;width:50.1px;height:32.0px"><span class="t"><span class="c">否</span></span></div>
<div class="td" style="left:928.5px;top:301.0px;width:45.3px;height:32.0px"><span class="minus"></span></div>
<div class="tr" style="left:118.5px;top:333.0px;width:855.3px;height:22.0px"></div>
<div class="td" style="left:118.5px;top:333.0px;width:26.0px;height:22.0px"><span class="cb"></span></div>
<div class="td" style="left:144.5px;top:333.0px;width:24.9px;height:22.0px"><span class="t">6</span></div>
<div class="td" style="left:169.4px;top:333.0px;width:49.2px;height:22.0px"><span class="t">WEDM<span class="c">（中</span><br><span class="c">丝）</span>1<span class="c">号机</span></span></div>
<div class="td" style="left:218.6px;top:333.0px;width:48.0px;height:22.0px"><span class="t">Mold1003</span></div>
<div class="td" style="left:266.6px;top:333.0px;width:34.8px;height:22.0px"><span class="t">600-20<br>207</span></div>
<div class="td" style="left:301.4px;top:333.0px;width:42.6px;height:22.0px"><span class="t"><span class="c">定模镶块</span></span></div>
<div class="td" style="left:344.0px;top:333.0px;width:31.5px;height:22.0px"><span class="t">1</span></div>
<div class="td" style="left:375.5px;top:333.0px;width:35.9px;height:22.0px"><span class="t">14749</span></div>
<div class="td" style="left:411.4px;top:333.0px;width:40.2px;height:22.0px"><span class="t"><span class="c">平磨</span></span></div>
<div class="td lk" style="left:451.6px;top:333.0px;width:50.4px;height:22.0px"><span class="t">WEDM</span></div>
<div class="td" style="left:502.0px;top:333.0px;width:34.5px;height:22.0px"><span class="t">5</span></div>
<div class="td" style="left:536.5px;top:333.0px;width:60.9px;height:22.0px"><span class="t">2023-09-22 2<br>1:39:44</span></div>
<div class="td" style="left:597.4px;top:333.0px;width:60.0px;height:22.0px"><span class="t">2023-09-23 0<br>2:39:44</span></div>
<div class="td" style="left:657.4px;top:333.0px;width:60.2px;height:22.0px"><span class="t">2023-09-29 1<br>0:59:00</span></div>
<div class="td ok" style="left:717.6px;top:333.0px;width:50.4px;height:22.0px"><span class="t">OK</span></div>
<div class="td ok" style="left:768.0px;top:333.0px;width:60.0px;height:22.0px"><span class="t">OK</span></div>
<div class="td ok" style="left:828.0px;top:333.0px;width:50.4px;height:22.0px"><span class="t"><span class="c">已完成</span></span></div>
<div class="td" style="left:878.4px;top:333.0px;width:50.1px;height:22.0px"><span class="t"><span class="c">否</span></span></div>
<div class="td" style="left:928.5px;top:333.0px;width:45.3px;height:22.0px"><span class="minus"></span></div>
<div class="tr odd" style="left:118.5px;top:355.0px;width:855.3px;height:21.0px"></div>
<div class="td" style="left:118.5px;top:355.0px;width:26.0px;height:21.0px"><span class="cb"></span></div>
<div class="td" style="left:144.5px;top:355.0px;width:24.9px;height:21.0px"><span class="t">7</span></div>
<div class="td" style="left:169.4px;top:355.0px;width:49.2px;height:21.0px"><span class="t">WEDM<span class="c">（中</span><br><span class="c">丝）</span>1<span class="c">号机</span></span></div>
<div class="td" style="left:218.6px;top:355.0px;width:48.0px;height:21.0px"><span class="t">Mold1003</span></div>
<div class="td" style="left:266.6px;top:355.0px;width:34.8px;height:21.0px"><span class="t">600-20<br>208</span></div>
<div class="td" style="left:301.4px;top:355.0px;width:42.6px;height:21.0px"><span class="t"><span class="c">定模镶块</span></span></div>
<div class="td" style="left:344.0px;top:355.0px;width:31.5px;height:21.0px"><span class="t">1</span></div>
<div class="td" style="left:375.5px;top:355.0px;width:35.9px;height:21.0px"><span class="t">14750</span></div>
<div class="td" style="left:411.4px;top:355.0px;width:40.2px;height:21.0px"><span class="t"><span class="c">平磨</span></span></div>
<div class="td lk" style="left:451.6px;top:355.0px;width:50.4px;height:21.0px"><span class="t">WEDM</span></div>
<div class="td" style="left:502.0px;top:355.0px;width:34.5px;height:21.0px"><span class="t">5</span></div>
<div class="td" style="left:536.5px;top:355.0px;width:60.9px;height:21.0px"><span class="t">2023-09-23 0<br>2:39:44</span></div>
<div class="td" style="left:597.4px;top:355.0px;width:60.0px;height:21.0px"><span class="t">2023-09-23 0<br>9:39:44</span></div>
<div class="td" style="left:657.4px;top:355.0px;width:60.2px;height:21.0px"><span class="t">2023-09-27 1<br>0:59:00</span></div>
<div class="td ng" style="left:717.6px;top:355.0px;width:50.4px;height:21.0px"><span class="t">NG</span></div>
<div class="td ng" style="left:768.0px;top:355.0px;width:60.0px;height:21.0px"><span class="t">NG</span></div>
<div class="td ng" style="left:828.0px;top:355.0px;width:50.4px;height:21.0px"><span class="t"><span class="c">未完成</span></span></div>
<div class="td" style="left:878.4px;top:355.0px;width:50.1px;height:21.0px"><span class="t"><span class="c">否</span></span></div>
<div class="td" style="left:928.5px;top:355.0px;width:45.3px;height:21.0px"><span class="minus"></span></div>
<div class="tr" style="left:118.5px;top:376.0px;width:855.3px;height:22.0px"></div>
<div class="td" style="left:118.5px;top:376.0px;width:26.0px;height:22.0px"><span class="cb"></span></div>
<div class="td" style="left:144.5px;top:376.0px;width:24.9px;height:22.0px"><span class="t">8</span></div>
<div class="td" style="left:169.4px;top:376.0px;width:49.2px;height:22.0px"><span class="t">WEDM<span class="c">（慢</span><br><span class="c">丝）</span>1<span class="c">号机</span></span></div>
<div class="td" style="left:218.6px;top:376.0px;width:48.0px;height:22.0px"><span class="t">Mold1003</span></div>
<div class="td" style="left:266.6px;top:376.0px;width:34.8px;height:22.0px"><span class="t">600-20<br>202</span></div>
<div class="td" style="left:301.4px;top:376.0px;width:42.6px;height:22.0px"><span class="t"><span class="c">定模镶块</span></span></div>
<div class="td" style="left:344.0px;top:376.0px;width:31.5px;height:22.0px"><span class="t">1</span></div>
<div class="td" style="left:375.5px;top:376.0px;width:35.9px;height:22.0px"><span class="t">14744</span></div>
<div class="td" style="left:411.4px;top:376.0px;width:40.2px;height:22.0px"><span class="t"><span class="c">平磨</span></span></div>
<div class="td lk" style="left:451.6px;top:376.0px;width:50.4px;height:22.0px"><span class="t">WEDM</span></div>
<div class="td" style="left:502.0px;top:376.0px;width:34.5px;height:22.0px"><span class="t">5</span></div>
<div class="td" style="left:536.5px;top:376.0px;width:60.9px;height:22.0px"><span class="t">2023-09-22 2<br>1:39:44</span></div>
<div class="td" style="left:597.4px;top:376.0px;width:60.0px;height:22.0px"><span class="t">2023-09-23 0<br>2:39:44</span></div>
<div class="td" style="left:657.4px;top:376.0px;width:60.2px;height:22.0px"><span class="t">2023-09-29 1<br>0:59:00</span></div>
<div class="td ok" style="left:717.6px;top:376.0px;width:50.4px;height:22.0px"><span class="t">OK</span></div>
<div class="td ok" style="left:768.0px;top:376.0px;width:60.0px;height:22.0px"><span class="t">OK</span></div>
<div class="td ok" style="left:828.0px;top:376.0px;width:50.4px;height:22.0px"><span class="t"><span class="c">已完成</span></span></div>
<div class="td" style="left:878.4px;top:376.0px;width:50.1px;height:22.0px"><span class="t"><span class="c">否</span></span></div>
<div class="td" style="left:928.5px;top:376.0px;width:45.3px;height:22.0px"><span class="minus"></span></div>
<div class="tr odd" style="left:118.5px;top:398.0px;width:855.3px;height:21.0px"></div>
<div class="td" style="left:118.5px;top:398.0px;width:26.0px;height:21.0px"><span class="cb"></span></div>
<div class="td" style="left:144.5px;top:398.0px;width:24.9px;height:21.0px"><span class="t">9</span></div>
<div class="td" style="left:169.4px;top:398.0px;width:49.2px;height:21.0px"><span class="t">WEDM<span class="c">（慢</span><br><span class="c">丝）</span>1<span class="c">号机</span></span></div>
<div class="td" style="left:218.6px;top:398.0px;width:48.0px;height:21.0px"><span class="t">Mold1003</span></div>
<div class="td" style="left:266.6px;top:398.0px;width:34.8px;height:21.0px"><span class="t">600-20<br>215</span></div>
<div class="td" style="left:301.4px;top:398.0px;width:42.6px;height:21.0px"><span class="t"><span class="c">定模镶块</span></span></div>
<div class="td" style="left:344.0px;top:398.0px;width:31.5px;height:21.0px"><span class="t">1</span></div>
<div class="td" style="left:375.5px;top:398.0px;width:35.9px;height:21.0px"><span class="t">14757</span></div>
<div class="td" style="left:411.4px;top:398.0px;width:40.2px;height:21.0px"><span class="t"><span class="c">平磨</span></span></div>
<div class="td lk" style="left:451.6px;top:398.0px;width:50.4px;height:21.0px"><span class="t">WEDM</span></div>
<div class="td" style="left:502.0px;top:398.0px;width:34.5px;height:21.0px"><span class="t">5</span></div>
<div class="td" style="left:536.5px;top:398.0px;width:60.9px;height:21.0px"><span class="t">2023-09-23 0<br>2:39:44</span></div>
<div class="td" style="left:597.4px;top:398.0px;width:60.0px;height:21.0px"><span class="t">2023-09-23 0<br>9:39:44</span></div>
<div class="td" style="left:657.4px;top:398.0px;width:60.2px;height:21.0px"><span class="t">2023-09-29 1<br>0:59:00</span></div>
<div class="td ok" style="left:717.6px;top:398.0px;width:50.4px;height:21.0px"><span class="t">OK</span></div>
<div class="td ok" style="left:768.0px;top:398.0px;width:60.0px;height:21.0px"><span class="t">OK</span></div>
<div class="td ok" style="left:828.0px;top:398.0px;width:50.4px;height:21.0px"><span class="t"><span class="c">已完成</span></span></div>
<div class="td" style="left:878.4px;top:398.0px;width:50.1px;height:21.0px"><span class="t"><span class="c">否</span></span></div>
<div class="td" style="left:928.5px;top:398.0px;width:45.3px;height:21.0px"><span class="minus"></span></div>
<div class="tr" style="left:118.5px;top:419.0px;width:855.3px;height:22.0px"></div>
<div class="td" style="left:118.5px;top:419.0px;width:26.0px;height:22.0px"><span class="cb"></span></div>
<div class="td" style="left:144.5px;top:419.0px;width:24.9px;height:22.0px"><span class="t">10</span></div>
<div class="td" style="left:169.4px;top:419.0px;width:49.2px;height:22.0px"><span class="t">WEDM<span class="c">（慢</span><br><span class="c">丝）</span>2<span class="c">号机</span></span></div>
<div class="td" style="left:218.6px;top:419.0px;width:48.0px;height:22.0px"><span class="t">Mold1003</span></div>
<div class="td" style="left:266.6px;top:419.0px;width:34.8px;height:22.0px"><span class="t">600-20<br>204</span></div>
<div class="td" style="left:301.4px;top:419.0px;width:42.6px;height:22.0px"><span class="t"><span class="c">定模镶块</span></span></div>
<div class="td" style="left:344.0px;top:419.0px;width:31.5px;height:22.0px"><span class="t">4</span></div>
<div class="td" style="left:375.5px;top:419.0px;width:35.9px;height:22.0px"><span class="t">14746</span></div>
<div class="td" style="left:411.4px;top:419.0px;width:40.2px;height:22.0px"><span class="t"><span class="c">平磨</span></span></div>
<div class="td lk" style="left:451.6px;top:419.0px;width:50.4px;height:22.0px"><span class="t">WEDM</span></div>
<div class="td" style="left:502.0px;top:419.0px;width:34.5px;height:22.0px"><span class="t">20</span></div>
<div class="td" style="left:536.5px;top:419.0px;width:60.9px;height:22.0px"><span class="t">2023-09-22 2<br>1:39:44</span></div>
<div class="td" style="left:597.4px;top:419.0px;width:60.0px;height:22.0px"><span class="t">2023-09-23 1<br>9:39:44</span></div>
<div class="td" style="left:657.4px;top:419.0px;width:60.2px;height:22.0px"><span class="t">2023-09-25 0<br>0:00:00</span></div>
<div class="td ok" style="left:717.6px;top:419.0px;width:50.4px;height:22.0px"><span class="t">OK</span></div>
<div class="td ok" style="left:768.0px;top:419.0px;width:60.0px;height:22.0px"><span class="t">OK</span></div>
<div class="td ok" style="left:828.0px;top:419.0px;width:50.4px;height:22.0px"><span class="t"><span class="c">已完成</span></span></div>
<div class="td" style="left:878.4px;top:419.0px;width:50.1px;height:22.0px"><span class="t"><span class="c">否</span></span></div>
<div class="td" style="left:928.5px;top:419.0px;width:45.3px;height:22.0px"><span class="minus"></span></div>
<div class="tr odd" style="left:118.5px;top:441.0px;width:855.3px;height:21.0px"></div>
<div class="td" style="left:118.5px;top:441.0px;width:26.0px;height:21.0px"><span class="cb"></span></div>
<div class="td" style="left:144.5px;top:441.0px;width:24.9px;height:21.0px"><span class="t">11</span></div>
<div class="td" style="left:169.4px;top:441.0px;width:49.2px;height:21.0px"><span class="t">WEDM<span class="c">（慢</span><br><span class="c">丝）</span>2<span class="c">号机</span></span></div>
<div class="td" style="left:218.6px;top:441.0px;width:48.0px;height:21.0px"><span class="t">mold1002</span></div>
<div class="td" style="left:266.6px;top:441.0px;width:34.8px;height:21.0px"><span class="t">669-20<br>207</span></div>
<div class="td" style="left:301.4px;top:441.0px;width:42.6px;height:21.0px"><span class="t"><span class="c">定模镶块</span></span></div>
<div class="td" style="left:344.0px;top:441.0px;width:31.5px;height:21.0px"><span class="t">1</span></div>
<div class="td" style="left:375.5px;top:441.0px;width:35.9px;height:21.0px"><span class="t">14719</span></div>
<div class="td" style="left:411.4px;top:441.0px;width:40.2px;height:21.0px"><span class="t"><span class="c">平磨</span></span></div>
<div class="td lk" style="left:451.6px;top:441.0px;width:50.4px;height:21.0px"><span class="t">WEDM</span></div>
<div class="td" style="left:502.0px;top:441.0px;width:34.5px;height:21.0px"><span class="t">5</span></div>
<div class="td" style="left:536.5px;top:441.0px;width:60.9px;height:21.0px"><span class="t">2023-09-23 0<br>0:00:00</span></div>
<div class="td" style="left:597.4px;top:441.0px;width:60.0px;height:21.0px"><span class="t">2023-09-23 0<br>2:39:44</span></div>
<div class="td" style="left:657.4px;top:441.0px;width:60.2px;height:21.0px"><span class="t">2023-06-12 0<br>0:00:00</span></div>
<div class="td ok" style="left:717.6px;top:441.0px;width:50.4px;height:21.0px"><span class="t">OK</span></div>
<div class="td ok" style="left:768.0px;top:441.0px;width:60.0px;height:21.0px"><span class="t">OK</span></div>
<div class="td ok" style="left:828.0px;top:441.0px;width:50.4px;height:21.0px"><span class="t"><span class="c">已完成</span></span></div>
<div class="td" style="left:878.4px;top:441.0px;width:50.1px;height:21.0px"><span class="t"><span class="c">是</span></span></div>
<div class="td" style="left:928.5px;top:441.0px;width:45.3px;height:21.0px"><span class="minus"></span></div>
<div class="tr" style="left:118.5px;top:462.0px;width:855.3px;height:22.0px"></div>
<div class="td" style="left:118.5px;top:462.0px;width:26.0px;height:22.0px"><span class="cb"></span></div>
<div class="td" style="left:144.5px;top:462.0px;width:24.9px;height:22.0px"><span class="t">12</span></div>
<div class="td" style="left:169.4px;top:462.0px;width:49.2px;height:22.0px"><span class="t">WEDM<span class="c">（慢</span><br><span class="c">丝）</span>2<span class="c">号机</span></span></div>
<div class="td" style="left:218.6px;top:462.0px;width:48.0px;height:22.0px"><span class="t">mold1002</span></div>
<div class="td" style="left:266.6px;top:462.0px;width:34.8px;height:22.0px"><span class="t">669-20<br>203</span></div>
<div class="td" style="left:301.4px;top:462.0px;width:42.6px;height:22.0px"><span class="t"><span class="c">定模镶块</span></span></div>
<div class="td" style="left:344.0px;top:462.0px;width:31.5px;height:22.0px"><span class="t">1</span></div>
<div class="td" style="left:375.5px;top:462.0px;width:35.9px;height:22.0px"><span class="t">14715</span></div>
<div class="td" style="left:411.4px;top:462.0px;width:40.2px;height:22.0px"><span class="t"><span class="c">平磨</span></span></div>
<div class="td lk" style="left:451.6px;top:462.0px;width:50.4px;height:22.0px"><span class="t">WEDM</span></div>
<div class="td" style="left:502.0px;top:462.0px;width:34.5px;height:22.0px"><span class="t">5</span></div>
<div class="td" style="left:536.5px;top:462.0px;width:60.9px;height:22.0px"><span class="t">2023-09-23 0<br>1:40:44</span></div>
<div class="td" style="left:597.4px;top:462.0px;width:60.0px;height:22.0px"><span class="t">2023-09-23 0<br>8:40:44</span></div>
<div class="td" style="left:657.4px;top:462.0px;width:60.2px;height:22.0px"><span class="t">2023-06-12 0<br>0:00:00</span></div>
<div class="td ng" style="left:717.6px;top:462.0px;width:50.4px;height:22.0px"><span class="t">NG</span></div>
<div class="td ng" style="left:768.0px;top:462.0px;width:60.0px;height:22.0px"><span class="t">NG</span></div>
<div class="td ng" style="left:828.0px;top:462.0px;width:50.4px;height:22.0px"><span class="t"><span class="c">未完成</span></span></div>
<div class="td" style="left:878.4px;top:462.0px;width:50.1px;height:22.0px"><span class="t"><span class="c">是</span></span></div>
<div class="td" style="left:928.5px;top:462.0px;width:45.3px;height:22.0px"><span class="minus"></span></div>
<div class="vl" style="left:144.25px;top:142.0px;height:341.5px"></div>
<div class="vl" style="left:169.15px;top:142.0px;height:341.5px"></div>
<div class="vl" style="left:218.35px;top:142.0px;height:341.5px"></div>
<div class="vl" style="left:266.35px;top:142.0px;height:341.5px"></div>
<div class="vl" style="left:301.15px;top:142.0px;height:341.5px"></div>
<div class="vl" style="left:343.75px;top:142.0px;height:341.5px"></div>
<div class="vl" style="left:375.25px;top:142.0px;height:341.5px"></div>
<div class="vl" style="left:411.15px;top:142.0px;height:341.5px"></div>
<div class="vl" style="left:451.35px;top:142.0px;height:341.5px"></div>
<div class="vl" style="left:501.75px;top:142.0px;height:341.5px"></div>
<div class="vl" style="left:536.25px;top:142.0px;height:341.5px"></div>
<div class="vl" style="left:597.15px;top:142.0px;height:341.5px"></div>
<div class="vl" style="left:657.15px;top:142.0px;height:341.5px"></div>
<div class="vl" style="left:717.35px;top:142.0px;height:341.5px"></div>
<div class="vl" style="left:767.75px;top:142.0px;height:341.5px"></div>
<div class="vl" style="left:827.75px;top:142.0px;height:341.5px"></div>
<div class="vl" style="left:878.15px;top:142.0px;height:341.5px"></div>
<div class="vl" style="left:928.25px;top:142.0px;height:341.5px"></div>
<div class="abs" style="left:973.8px;top:141.5px;width:4px;height:400px;background:#eff2f6"></div>
</div>
</body>
</html>
